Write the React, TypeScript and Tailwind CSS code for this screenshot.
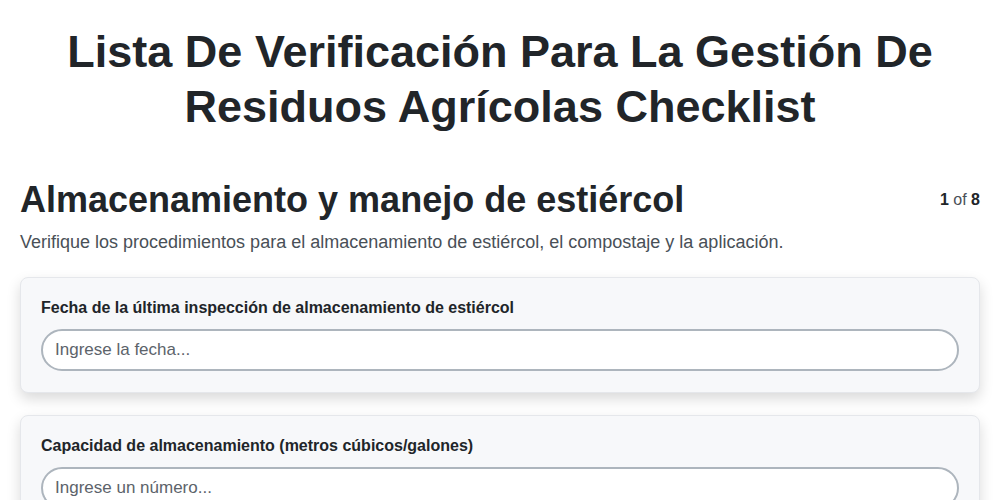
import React from 'react';

const fields = [
  { label: 'Fecha de la última inspección de almacenamiento de estiércol', placeholder: 'Ingrese la fecha...' },
  { label: 'Capacidad de almacenamiento (metros cúbicos/galones)', placeholder: 'Ingrese un número...' },
];

export default function App() {
  return (
    <div className="min-h-screen bg-white px-5 pt-6 pb-10 text-[#212529] font-['Liberation_Sans',Arial,sans-serif]">
      <h1 className="text-center text-[45px] font-bold leading-[55px] px-10">
        Lista De Verificación Para La Gestión De Residuos Agrícolas Checklist
      </h1>

      <div className="mt-11 flex items-center justify-between">
        <h2 className="text-4xl font-bold leading-[1.2]">Almacenamiento y manejo de estiércol</h2>
        <div className="text-base">
          <span className="font-bold">1</span> <span className="text-[#495057]">of</span>{' '}
          <span className="font-bold">8</span>
        </div>
      </div>
      <p className="mt-2 text-lg leading-[27px] text-[#495057]">
        Verifique los procedimientos para el almacenamiento de estiércol, el compostaje y la aplicación.
      </p>

      <div className="mt-[21px] flex flex-col gap-[22px]">
        {fields.map((f) => (
          <div
            key={f.label}
            className="rounded-lg border border-[#e5e7eb] bg-[#f7f8fa] px-5 pt-5 pb-[21px] shadow-[0_6px_14px_rgba(0,0,0,0.15)]"
          >
            <label className="block text-base font-bold leading-5 mb-[11px]">{f.label}</label>
            <input
              type="text"
              placeholder={f.placeholder}
              className="block w-full h-[42px] rounded-full border-2 border-[#adb5bd] bg-white px-3 text-[17px] text-[#212529] placeholder:text-[#5c636a] outline-none"
            />
          </div>
        ))}
      </div>
    </div>
  );
}
